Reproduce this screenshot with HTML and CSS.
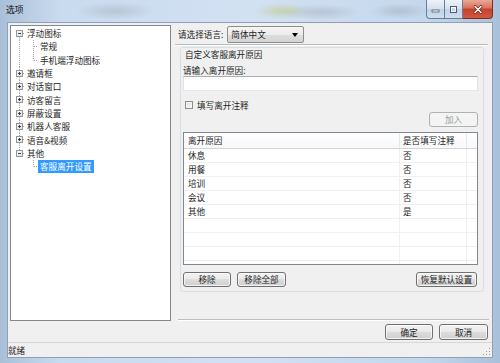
FILE: index.html
```html
<!DOCTYPE html>
<html lang="zh-CN">
<head>
<meta charset="utf-8">
<title>选项</title>
<link rel="stylesheet" href="styles.css">
</head>
<body>
<svg class="defs" width="0" height="0" aria-hidden="true">
  <defs>
    <linearGradient id="boxg" x1="0" y1="0" x2="1" y2="1">
      <stop offset="0" stop-color="#ffffff"/>
      <stop offset="1" stop-color="#d8dde3"/>
    </linearGradient>
    <symbol id="root-first" viewBox="0 0 14 13.3">
      <line x1="8.5" y1="10.3" x2="8.5" y2="13.3" stroke="#a0a0a0" stroke-dasharray="1 1"/>
      <line x1="12" y1="6.5" x2="14" y2="6.5" stroke="#a0a0a0" stroke-dasharray="1 1"/>
      <rect x="5.5" y="3.5" width="6" height="6" fill="url(#boxg)" stroke="#969696"/>
      <line x1="7" y1="6.5" x2="10" y2="6.5" stroke="#3c3c3c"/>
    </symbol>
    <symbol id="root-mid" viewBox="0 0 14 13.3">
      <line x1="8.5" y1="0" x2="8.5" y2="3" stroke="#a0a0a0" stroke-dasharray="1 1"/>
      <line x1="8.5" y1="10.3" x2="8.5" y2="13.3" stroke="#a0a0a0" stroke-dasharray="1 1"/>
      <line x1="12" y1="6.5" x2="14" y2="6.5" stroke="#a0a0a0" stroke-dasharray="1 1"/>
      <rect x="5.5" y="3.5" width="6" height="6" fill="url(#boxg)" stroke="#969696"/>
      <line x1="7" y1="6.5" x2="10" y2="6.5" stroke="#3c3c3c"/>
      <line x1="8.5" y1="5" x2="8.5" y2="8" stroke="#3c3c3c"/>
    </symbol>
    <symbol id="root-last" viewBox="0 0 14 13.3">
      <line x1="8.5" y1="0" x2="8.5" y2="3" stroke="#a0a0a0" stroke-dasharray="1 1"/>
      <line x1="12" y1="6.5" x2="14" y2="6.5" stroke="#a0a0a0" stroke-dasharray="1 1"/>
      <rect x="5.5" y="3.5" width="6" height="6" fill="url(#boxg)" stroke="#969696"/>
      <line x1="7" y1="6.5" x2="10" y2="6.5" stroke="#3c3c3c"/>
    </symbol>
    <symbol id="child-mid" viewBox="0 0 27 13.3">
      <line x1="8.5" y1="0" x2="8.5" y2="13.3" stroke="#a0a0a0" stroke-dasharray="1 1"/>
      <line x1="22.5" y1="0" x2="22.5" y2="13.3" stroke="#a0a0a0" stroke-dasharray="1 1"/>
      <line x1="23" y1="6.5" x2="27" y2="6.5" stroke="#a0a0a0" stroke-dasharray="1 1"/>
    </symbol>
    <symbol id="child-last" viewBox="0 0 27 13.3">
      <line x1="8.5" y1="0" x2="8.5" y2="13.3" stroke="#a0a0a0" stroke-dasharray="1 1"/>
      <line x1="22.5" y1="0" x2="22.5" y2="6.5" stroke="#a0a0a0" stroke-dasharray="1 1"/>
      <line x1="23" y1="6.5" x2="27" y2="6.5" stroke="#a0a0a0" stroke-dasharray="1 1"/>
    </symbol>
    <symbol id="child-end" viewBox="0 0 27 13.3">
      <line x1="22.5" y1="0" x2="22.5" y2="6.5" stroke="#a0a0a0" stroke-dasharray="1 1"/>
      <line x1="23" y1="6.5" x2="27" y2="6.5" stroke="#a0a0a0" stroke-dasharray="1 1"/>
    </symbol>
  </defs>
</svg>

<div class="window">
  <div class="titlebar">
    <span class="title">选项</span>
    <div class="controls">
      <div class="ctl min"><svg width="9" height="9" viewBox="0 0 9 9"><rect x="1" y="5" width="7" height="2" fill="#fff" stroke="#4a5b72" stroke-width="0.8"/></svg></div>
      <div class="ctl max"><svg width="9" height="9" viewBox="0 0 9 9"><rect x="1.5" y="1.5" width="6" height="6" fill="none" stroke="#4a5b72" stroke-width="1"/><rect x="2.5" y="2.5" width="4" height="4" fill="none" stroke="#fff" stroke-width="0.8"/></svg></div>
      <div class="ctl close"><svg width="10" height="9" viewBox="0 0 10 9"><path d="M2 1.5 L8 7.5 M8 1.5 L2 7.5" stroke="#5a1a10" stroke-width="2.6" stroke-linecap="round"/><path d="M2 1.5 L8 7.5 M8 1.5 L2 7.5" stroke="#fff" stroke-width="1.6" stroke-linecap="round"/></svg></div>
    </div>
  </div>

  <div class="client">
    <div class="main">
      <div class="tree">
        <div class="tree-row"><svg class="g-root"><use href="#root-first"/></svg><span class="node">浮动图标</span></div>
        <div class="tree-row"><svg class="g-child"><use href="#child-mid"/></svg><span class="node">常规</span></div>
        <div class="tree-row"><svg class="g-child"><use href="#child-last"/></svg><span class="node">手机端浮动图标</span></div>
        <div class="tree-row"><svg class="g-root"><use href="#root-mid"/></svg><span class="node">邀请框</span></div>
        <div class="tree-row"><svg class="g-root"><use href="#root-mid"/></svg><span class="node">对话窗口</span></div>
        <div class="tree-row"><svg class="g-root"><use href="#root-mid"/></svg><span class="node">访客留言</span></div>
        <div class="tree-row"><svg class="g-root"><use href="#root-mid"/></svg><span class="node">屏蔽设置</span></div>
        <div class="tree-row"><svg class="g-root"><use href="#root-mid"/></svg><span class="node">机器人客服</span></div>
        <div class="tree-row"><svg class="g-root"><use href="#root-mid"/></svg><span class="node">语音&amp;视频</span></div>
        <div class="tree-row"><svg class="g-root"><use href="#root-last"/></svg><span class="node">其他</span></div>
        <div class="tree-row"><svg class="g-child"><use href="#child-end"/></svg><span class="node selected">客服离开设置</span></div>
      </div>

      <div class="right">
        <div class="panel">
          <div class="lang-row">
            <span class="lang-label">请选择语言:</span>
            <div class="combo"><span>简体中文</span><span class="arrow"></span></div>
          </div>
          <div class="sep-top"></div>
          <div class="group">
            <div class="g-title">自定义客服离开原因</div>
            <div class="g-label">请输入离开原因:</div>
            <div class="input"></div>
            <div class="check-row"><span class="checkbox"></span><span class="check-text">填写离开注释</span></div>
            <div class="add-row"><div class="btn disabled add">加入</div></div>
            <div class="list">
              <div class="list-head">
                <div class="cell c1">离开原因</div>
                <div class="cell c2">是否填写注释</div>
                <div class="cell c3"></div>
              </div>
              <div class="list-row"><div class="cell c1">休息</div><div class="cell c2">否</div><div class="cell c3"></div></div>
              <div class="list-row"><div class="cell c1">用餐</div><div class="cell c2">否</div><div class="cell c3"></div></div>
              <div class="list-row"><div class="cell c1">培训</div><div class="cell c2">否</div><div class="cell c3"></div></div>
              <div class="list-row"><div class="cell c1">会议</div><div class="cell c2">否</div><div class="cell c3"></div></div>
              <div class="list-row"><div class="cell c1">其他</div><div class="cell c2">是</div><div class="cell c3"></div></div>
              <div class="list-row"><div class="cell c1"></div><div class="cell c2"></div><div class="cell c3"></div></div>
              <div class="list-row"><div class="cell c1"></div><div class="cell c2"></div><div class="cell c3"></div></div>
              <div class="list-row"><div class="cell c1"></div><div class="cell c2"></div><div class="cell c3"></div></div>
              <div class="list-row"><div class="cell c1"></div><div class="cell c2"></div><div class="cell c3"></div></div>
            </div>
            <div class="list-buttons">
              <div class="btn w48">移除</div>
              <div class="btn w49 gap">移除全部</div>
              <div class="btn w61 push">恢复默认设置</div>
            </div>
          </div>
          <div class="sep-bottom"></div>
        </div>
        <div class="dlg-buttons">
          <div class="btn w48 tall">确定</div>
          <div class="btn w49 tall">取消</div>
        </div>
      </div>
    </div>
    <div class="status">
      <span>就绪</span>
      <svg class="grip" width="8" height="8" viewBox="0 0 8 8">
        <rect x="6" y="0" width="1" height="1" fill="#a0a0a0"/>
        <rect x="3" y="3" width="1" height="1" fill="#a0a0a0"/>
        <rect x="6" y="3" width="1" height="1" fill="#a0a0a0"/>
        <rect x="0" y="6" width="1" height="1" fill="#a0a0a0"/>
        <rect x="3" y="6" width="1" height="1" fill="#a0a0a0"/>
        <rect x="6" y="6" width="1" height="1" fill="#a0a0a0"/>
      </svg>
    </div>
  </div>
</div>
</body>
</html>
```

FILE: styles.css
```css
* { box-sizing: border-box; }

html, body {
  margin: 0;
  padding: 0;
}

body {
  width: 500px;
  height: 363px;
  overflow: hidden;
  font-family: "Noto Sans CJK SC", "Noto Sans", sans-serif;
  font-size: 8.6px;
  color: #1e1e1e;
}

.defs {
  position: absolute;
  width: 0;
  height: 0;
}

.window {
  width: 500px;
  height: 363px;
  display: flex;
  flex-direction: column;
  background-color: #bdd0e7;
  background-image:
    radial-gradient(ellipse 40px 9px at 115px 11px, rgba(160,170,180,0.45), rgba(160,170,180,0) 100%),
    radial-gradient(ellipse 28px 8px at 282px 11px, rgba(190,200,120,0.55), rgba(190,200,120,0) 100%),
    radial-gradient(ellipse 40px 8px at 320px 12px, rgba(150,160,175,0.4), rgba(150,160,175,0) 100%),
    radial-gradient(ellipse 30px 8px at 400px 11px, rgba(150,160,175,0.4), rgba(150,160,175,0) 100%),
    linear-gradient(to right, #a9bfd8 0, #c9dbef 12%, #d2e1f2 50%, #c4d7ec 85%, #aac1db 100%);
}

.titlebar {
  height: 22px;
  flex: none;
  display: flex;
  align-items: flex-start;
}

.title {
  margin: 4px 0 0 6px;
  font-size: 8.8px;
  line-height: 12px;
  color: #111;
}

.controls {
  margin-left: auto;
  margin-right: 7px;
  display: flex;
  height: 19px;
}

.ctl {
  height: 19px;
  width: 18px;
  display: flex;
  align-items: center;
  justify-content: center;
  border: 1px solid #6a7d96;
  border-top: none;
  background: linear-gradient(#eef3f9, #d4e0ee 50%, #c2d3e7 51%, #d0ddec);
}

.ctl.min {
  width: 19px;
  border-bottom-left-radius: 4px;
}

.ctl.max {
  border-left: none;
}

.ctl.close {
  width: 30px;
  border-left: none;
  border-color: #7a2e22;
  border-bottom-right-radius: 4px;
  background: linear-gradient(#e9a898, #d8715d 45%, #c6412b 50%, #d2583f);
}

.client {
  flex: 1;
  margin: 0 7px 5px;
  background: #f0f0f0;
  border: 1px solid #8da0b8;
  display: flex;
  flex-direction: column;
}

.main {
  flex: 1;
  display: flex;
  gap: 4px;
  padding: 2px 2px 0 2px;
}

/* tree */
.tree {
  width: 161px;
  height: 296px;
  flex: none;
  background: #fff;
  border: 1px solid #828790;
  padding-top: 1px;
}

.tree-row {
  height: 13.3px;
  display: flex;
  align-items: center;
}

.tree-row svg {
  flex: none;
  height: 13.3px;
}

.g-root { width: 14px; }
.g-child { width: 27px; }

.node {
  padding: 0 2px;
  line-height: 13px;
  white-space: nowrap;
}

.node.selected {
  background: #3399ff;
  color: #fff;
}

/* right side */
.right {
  width: 315px;
  flex: none;
  display: flex;
  flex-direction: column;
}

.panel {
  height: 296px;
  display: flex;
  flex-direction: column;
}

.lang-row {
  height: 19px;
  display: flex;
  align-items: flex-start;
  padding-left: 3px;
}

.lang-label {
  line-height: 19px;
}

.combo {
  margin: 1px 0 0 4px;
  width: 77px;
  height: 17px;
  border: 1px solid #8e8f8f;
  border-radius: 2px;
  background: linear-gradient(#f4f4f4, #ececec 50%, #dfdfdf 51%, #d2d2d2);
  display: flex;
  align-items: center;
  padding: 0 5px 0 3px;
  line-height: 15px;
}

.arrow {
  margin-left: auto;
  width: 0;
  height: 0;
  border-left: 3px solid transparent;
  border-right: 3px solid transparent;
  border-top: 4px solid #000;
}

.sep-top {
  height: 2px;
  margin-right: 2px;
  border-top: 1px solid #bdbdbd;
  border-bottom: 1px solid #fff;
}

.group {
  margin: 1px 6px 0 5px;
  height: 245px;
  border: 1px solid #d5dfe5;
  border-radius: 3px;
  padding: 0 5px 0 2px;
  display: flex;
  flex-direction: column;
}

.g-title {
  height: 12px;
  line-height: 12px;
  padding-left: 2px;
}

.g-label {
  margin-top: 4px;
  height: 12px;
  line-height: 12px;
}

.input {
  height: 15px;
  background: #fff;
  border: 1px solid #abadb3;
  border-color: #abadb3 #e2e3ea #e3e9ef #e2e3ea;
}

.check-row {
  margin-top: 8px;
  height: 12px;
  display: flex;
  align-items: center;
}

.checkbox {
  margin-left: 2px;
  width: 8px;
  height: 8px;
  border: 1px solid #8e8f8f;
  background: linear-gradient(135deg, #dcdcdc, #fdfdfd);
  box-shadow: inset 0 0 0 1px #f4f4f4;
}

.check-text {
  margin-left: 4px;
  line-height: 12px;
}

.add-row {
  margin-top: 1px;
  display: flex;
  justify-content: flex-end;
}

.btn {
  height: 15px;
  border: 1px solid #707070;
  border-radius: 3px;
  background: linear-gradient(#f2f2f2, #ebebeb 45%, #dddddd 50%, #cfcfcf);
  box-shadow: inset 0 0 0 1px rgba(255,255,255,0.7);
  display: flex;
  align-items: center;
  justify-content: center;
  line-height: 13px;
  color: #1e1e1e;
  flex: none;
}

.btn.disabled {
  border-color: #adb2b5;
  background: #f4f4f4;
  color: #9a9a9a;
  box-shadow: none;
}

.btn.add { width: 49px; }
.btn.w48 { width: 48px; }
.btn.w49 { width: 49px; }
.btn.w61 { width: 61px; }
.btn.gap { margin-left: 6px; }
.btn.push { margin-left: auto; margin-right: 1px; }
.btn.tall { height: 16px; }

/* list view */
.list {
  margin-top: 5px;
  height: 133px;
  background: #fff;
  border: 1px solid #828790;
  overflow: hidden;
}

.list-head,
.list-row {
  display: grid;
  grid-template-columns: 216px 67px 1fr;
}

.list-head {
  height: 16px;
  border-bottom: 1px solid #d5d5d5;
  background: linear-gradient(#ffffff, #f7f8fa);
}

.list-head .cell {
  line-height: 15px;
  border-right: 1px solid #e3e8ee;
}

.list-row {
  height: 14px;
  border-bottom: 1px solid #f0f0f0;
}

.list-row .cell {
  line-height: 13px;
  border-right: 1px solid #f0f0f0;
}

.cell.c1 { padding-left: 4px; }
.cell.c2 { padding-left: 3px; }
.cell.c3 { border-right: none; }

.list-buttons {
  margin-top: 7px;
  display: flex;
}

.sep-bottom {
  margin: auto 1px 0 3px;
  height: 2px;
  border-top: 1px solid #bdbdbd;
  border-bottom: 1px solid #fff;
}

.dlg-buttons {
  margin-top: 3px;
  display: flex;
  justify-content: flex-end;
  gap: 6px;
  padding-right: 2px;
}

/* status bar */
.status {
  height: 15px;
  flex: none;
  border-top: 1px solid #d7d7d7;
  display: flex;
  align-items: center;
  line-height: 14px;
  padding-right: 1px;
}

.grip {
  margin-left: auto;
  align-self: flex-end;
  margin-bottom: 1px;
}
```
